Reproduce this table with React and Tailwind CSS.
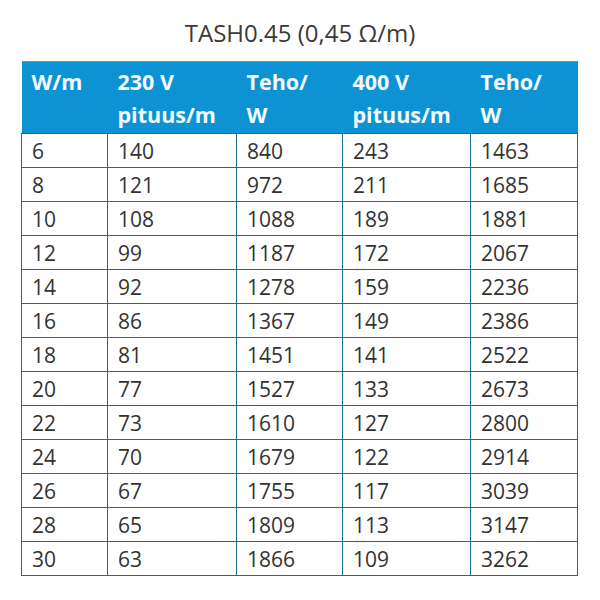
export default function App() {
  const rows = [
    [6, 140, 840, 243, 1463],
    [8, 121, 972, 211, 1685],
    [10, 108, 1088, 189, 1881],
    [12, 99, 1187, 172, 2067],
    [14, 92, 1278, 159, 2236],
    [16, 86, 1367, 149, 2386],
    [18, 81, 1451, 141, 2522],
    [20, 77, 1527, 133, 2673],
    [22, 73, 1610, 127, 2800],
    [24, 70, 1679, 122, 2914],
    [26, 67, 1755, 117, 3039],
    [28, 65, 1809, 113, 3147],
    [30, 63, 1866, 109, 3262],
  ];
  const headers = [
    ["W/m", ""],
    ["230 V", "pituus/m"],
    ["Teho/", "W"],
    ["400 V", "pituus/m"],
    ["Teho/", "W"],
  ];
  const widths = ["w-[86px]", "w-[129px]", "w-[106px]", "w-[128px]", "w-[107px]"];
  return (
    <div className="w-[600px] h-[600px] bg-white pt-[17px] font-['Open_Sans',sans-serif] text-[#333]">
      <div className="text-center text-[24px] leading-[32px] text-[#3a3a3a]">TASH0.45 (0,45 Ω/m)</div>
      <table className="mt-[12px] ml-[21px] w-[556px] table-fixed border-collapse">
        <colgroup>
          {widths.map((w, i) => (
            <col key={i} className={w} />
          ))}
        </colgroup>
        <thead>
          <tr className="bg-[#0d93d4] h-[72px]">
            {headers.map((h, i) => (
              <th key={i} className="align-top text-left pl-[10px] pt-[3px] text-[21.5px] leading-[33px] font-bold text-[#f4fbff] border-t border-[#3aa7dc]">
                <div>{h[0]}</div>
                <div>{h[1] || "\u00a0"}</div>
              </th>
            ))}
          </tr>
        </thead>
        <tbody>
          {rows.map((r, i) => (
            <tr key={i} className="h-[34px]">
              {r.map((c, j) => (
                <td key={j} className="border border-[#1f6a8e] pl-[10px] text-[21px] leading-[32px] p-0 align-middle">
                  {c}
                </td>
              ))}
            </tr>
          ))}
        </tbody>
      </table>
    </div>
  );
}
